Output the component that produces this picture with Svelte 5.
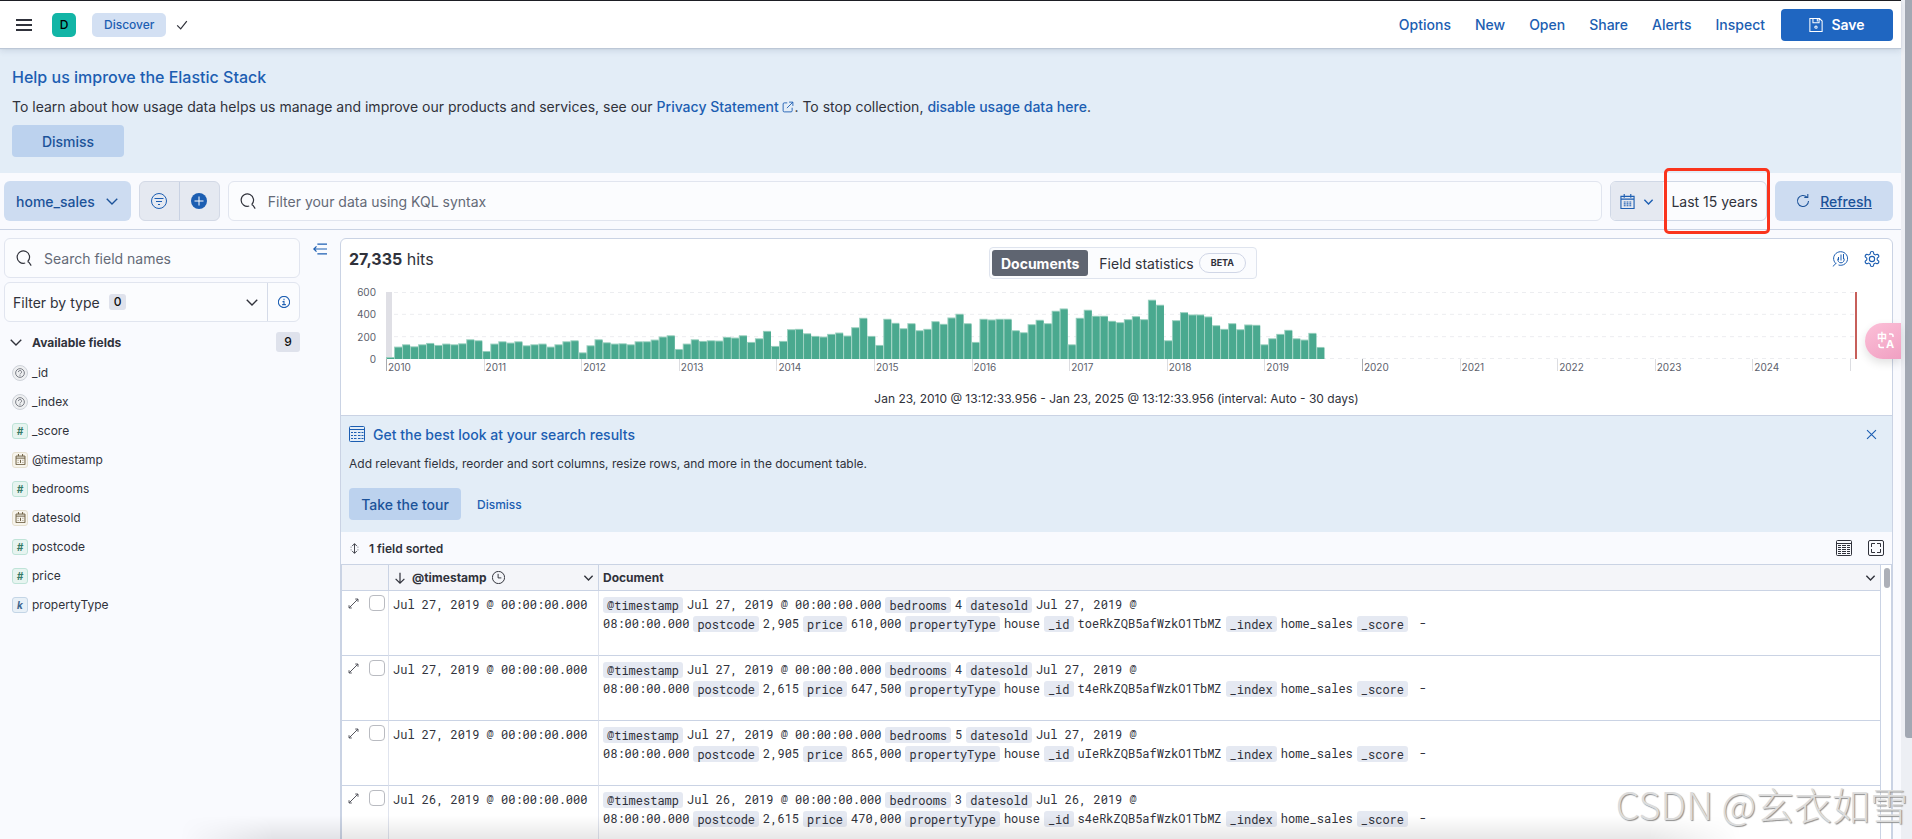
<script>
  const menuLinks = ['Options', 'New', 'Open', 'Share', 'Alerts', 'Inspect'];

  const fields = [
    { name: '_id', type: 'unknown' },
    { name: '_index', type: 'unknown' },
    { name: '_score', type: 'number' },
    { name: '@timestamp', type: 'date' },
    { name: 'bedrooms', type: 'number' },
    { name: 'datesold', type: 'date' },
    { name: 'postcode', type: 'number' },
    { name: 'price', type: 'number' },
    { name: 'propertyType', type: 'keyword' }
  ];

  // documents per 30 day bucket
  const counts = [
    18, 111, 132, 114, 132, 144, 126, 138, 132, 141, 177, 168, 72, 138, 159, 147, 159, 123, 132, 138,
    111, 132, 159, 168, 60, 123, 177, 150, 138, 141, 132, 159, 159, 174, 201, 213, 90, 138, 177, 162,
    168, 165, 198, 192, 213, 153, 186, 252, 117, 162, 267, 270, 231, 207, 201, 225, 237, 210, 285, 369,
    207, 126, 360, 324, 276, 321, 258, 270, 339, 315, 372, 405, 321, 153, 360, 354, 360, 360, 258, 240,
    312, 351, 321, 432, 453, 132, 369, 441, 387, 387, 342, 330, 357, 384, 357, 531, 486, 168, 348, 420,
    399, 399, 381, 303, 270, 321, 267, 309, 306, 132, 186, 225, 261, 186, 174, 234, 108
  ];
  const years = Array.from({ length: 15 }, (_, i) => 2010 + i);
  const maxCount = 600;
  const plotWidth = 1471;
  const plotHeight = 67;
  const bucketWidth = 8.02;
  const yearWidth = (97.6 / plotWidth) * 100;

  const docs = [
    { day: 'Jul 27, 2019', bedrooms: 4, postcode: '2,905', price: '610,000', id: 'toeRkZQB5afWzkO1TbMZ' },
    { day: 'Jul 27, 2019', bedrooms: 4, postcode: '2,615', price: '647,500', id: 't4eRkZQB5afWzkO1TbMZ' },
    { day: 'Jul 27, 2019', bedrooms: 5, postcode: '2,905', price: '865,000', id: 'uIeRkZQB5afWzkO1TbMZ' },
    { day: 'Jul 26, 2019', bedrooms: 3, postcode: '2,615', price: '470,000', id: 's4eRkZQB5afWzkO1TbMZ' }
  ];

  const icons = {
    check: 'M2.5 8.5l4 4 7-9',
    down: 'M2 5.5l6 6 6-6',
    search: 'M11.6 11.6a6.2 6.2 0 1 0-2.4 1.4M11.6 11.4l1.6 1.2 2 3',
    filter: 'M8 .5a7.5 7.5 0 1 0 0 15 7.5 7.5 0 0 0 0-15zM3.5 5.5h9M5 8.5h6M7 11.5h2',
    calendar: 'M1 2.5h14v13H1zM1 5.5h14M4.5 0v4M11.5 0v4M4 8.5h2M7 8.5h2M10 8.5h2M4 10.5h2M7 10.5h2M10 10.5h2M4 12.5h2M7 12.5h2M10 12.5h2',
    refresh: 'M12.5 3.5A6.3 6.3 0 1 0 14.3 8M13.5 0v4h-4',
    save: 'M1 .5h11l3 3v12H1zM4.5.5v5h7v-5M9.5 1v3M8 9.2a1.3 1.3 0 1 0 0 2.6 1.3 1.3 0 0 0 0-2.6z',
    info: 'M8 .5a7.5 7.5 0 1 0 0 15 7.5 7.5 0 0 0 0-15zM8 3.5v2M6 7.5h2v4M5.5 11.5h5',
    collapse: 'M5 2.5h11M1 8h15M5 13.5h11M4 5L1 8l3 3',
    external: 'M7 2.5H3A1.5 1.5 0 0 0 1.5 4v9A1.5 1.5 0 0 0 3 14.5h9a1.5 1.5 0 0 0 1.5-1.5V9M9.5 1.5h5v5M14.5 1.5l-8 8',
    lens: 'M4.2 12.8A7 6.8 0 1 1 6.5 14M4.2 12.2L.8 15.5M6 7.5a3.2 3.2 0 1 0 6 0M9 3.5v6M6.5 6v3M11.5 3v5',
    table: 'M1.5.5h13a1 1 0 0 1 1 1v13a1 1 0 0 1-1 1h-13a1 1 0 0 1-1-1v-13a1 1 0 0 1 1-1zM.5 3.5h15M2 6.5h2M5 6.5h2.5M9 6.5h2.5M12.5 6.5h2M2 9.5h2M5 9.5h2.5M9 9.5h2.5M12.5 9.5h2M2 12.5h2M5 12.5h2.5M9 12.5h2.5M12.5 12.5h2',
    density: 'M1.5.5h13a1 1 0 0 1 1 1v13a1 1 0 0 1-1 1h-13a1 1 0 0 1-1-1v-13a1 1 0 0 1 1-1zM.5 3.5h15M2 5.5h3M6 5.5h4M11 5.5h3M2 7.5h3M6 7.5h4M11 7.5h3M2 9.5h3M6 9.5h4M11 9.5h3M2 11.5h3M6 11.5h4M11 11.5h3M2 13.5h3M6 13.5h4M11 13.5h3',
    fullscreen: 'M2 .5h12A1.5 1.5 0 0 1 15.5 2v12a1.5 1.5 0 0 1-1.5 1.5H2A1.5 1.5 0 0 1 .5 14V2A1.5 1.5 0 0 1 2 .5zM3.5 7V3.5H7M9 3.5h3.5V7M12.5 9v3.5H9M7 12.5H3.5V9',
    close: 'M1.5 1.5l13 13M14.5 1.5l-13 13',
    sort: 'M8 1v14M4.5 4.5L8 1l3.5 3.5M4.5 11.5L8 15l3.5-3.5M3 5.5v1M13 5.5v1M3 9.5v1M13 9.5v1',
    arrowDown: 'M8 2v12M3 9l5 5 5-5',
    clock: 'M8 .5a7.5 7.5 0 1 0 0 15 7.5 7.5 0 0 0 0-15zM7.5 3.5v5h4',
    expand: 'M2 14L14 2M10.5 1.5h4v4M1.5 10.5v4h4',
    unknown: 'M8 1a7 7 0 1 0 0 14A7 7 0 0 0 8 1zM5.5 6.5A2.5 2.5 0 1 1 9 8.7q-1 .5-1 1.5M8 11.5V13',
    date: 'M1.5 3h13v12.5h-13zM1.5 6h13M5 0v3M11 0v3M4.5 8.5v1M4.5 12v1M8 8.5V13M11.5 8.5v1M11.5 12v1'
  };
</script>

{#snippet icon(name, size = 16, weight = 1)}
  <svg class="icon" width={size} height={size} viewBox="0 0 16 16" stroke-width={weight} aria-hidden="true">
    <path d={icons[name]} />
  </svg>
{/snippet}

<div class="app">
  <div class="page">
    <header class="header">
      <button class="icon-btn menu" aria-label="Toggle navigation">
        <svg width="16" height="12" viewBox="0 0 16 12"><path d="M0 0h16v2H0zM0 5h16v2H0zM0 10h16v2H0z" fill="currentColor" /></svg>
      </button>
      <span class="avatar">D</span>
      <a class="crumb" href="#discover">Discover</a>
      <span class="saved">{@render icon('check', 14, 1.4)}</span>
      <nav class="top-nav">
        {#each menuLinks as link}
          <a href="#{link.toLowerCase()}">{link}</a>
        {/each}
      </nav>
      <button class="btn primary">{@render icon('save', 14, 1.2)} Save</button>
    </header>

    <section class="telemetry">
      <h2>Help us improve the Elastic Stack</h2>
      <p>
        To learn about how usage data helps us manage and improve our products and services, see our
        <a href="#privacy">Privacy Statement {@render icon('external', 12, 1.2)}</a>. To stop collection,
        <a href="#usage">disable usage data here</a>.
      </p>
      <button class="btn filled">Dismiss</button>
    </section>

    <div class="query-bar">
      <button class="data-view">home_sales {@render icon('down', 14, 1.6)}</button>
      <div class="filter-group">
        <button aria-label="Saved queries">{@render icon('filter')}</button>
        <button aria-label="Add filter">
          <svg width="16" height="16" viewBox="0 0 16 16">
            <circle cx="8" cy="8" r="8" fill="currentColor" />
            <path d="M8 3.5v9M3.5 8h9" stroke="#fff" />
          </svg>
        </button>
      </div>
      <label class="search-box grow">
        {@render icon('search', 16, 1.2)}
        <input type="text" aria-label="Query" placeholder="Filter your data using KQL syntax" />
      </label>
      <div class="date-picker">
        <button class="quick" aria-label="Date quick select">
          {@render icon('calendar', 15, 1.2)}
          {@render icon('down', 11, 2)}
        </button>
        <div class="range">
          <button>Last 15 years</button>
        </div>
      </div>
      <button class="refresh">{@render icon('refresh', 14, 1.2)} <span>Refresh</span></button>
    </div>

    <div class="body">
      <aside class="sidebar">
        <label class="search-box">
          {@render icon('search', 16, 1.2)}
          <input type="text" aria-label="Field names" placeholder="Search field names" />
        </label>
        <div class="type-filter">
          <button class="type-btn">Filter by type <span class="count">0</span> {@render icon('down', 14, 1.6)}</button>
          <button class="type-info" aria-label="Field types">{@render icon('info', 12, 1.4)}</button>
        </div>
        <button class="group-head">
          {@render icon('down', 14, 1.6)}
          <span>Available fields</span>
          <span class="total">9</span>
        </button>
        <ul class="fields">
          {#each fields as field}
            <li>
              <span class="token {field.type}">
                {#if field.type === 'number'}
                  #
                {:else if field.type === 'keyword'}
                  k
                {:else}
                  {@render icon(field.type, field.type === 'date' ? 11 : 10, 1.4)}
                {/if}
              </span>
              {field.name}
            </li>
          {/each}
        </ul>
      </aside>

      <button class="icon-btn collapse" aria-label="Hide sidebar">{@render icon('collapse', 14, 1.4)}</button>

      <main class="panel">
        <section class="histogram">
          <div class="panel-top">
            <p class="hits"><strong>27,335</strong> hits</p>
            <div class="tabs">
              <button class="active">Documents</button>
              <button>Field statistics <span class="beta">BETA</span></button>
            </div>
            <div class="chart-tools">
              <button class="icon-btn" aria-label="Edit visualization">{@render icon('lens')}</button>
              <button class="icon-btn" aria-label="Chart options">
                <svg class="icon" width="18" height="18" viewBox="0 0 24 24" stroke-width="1.5">
                  <path d="M12.22 2h-.44a2 2 0 0 0-2 2v.18a2 2 0 0 1-1 1.73l-.43.25a2 2 0 0 1-2 0l-.15-.08a2 2 0 0 0-2.73.73l-.22.38a2 2 0 0 0 .73 2.73l.15.1a2 2 0 0 1 1 1.72v.51a2 2 0 0 1-1 1.74l-.15.09a2 2 0 0 0-.73 2.73l.22.38a2 2 0 0 0 2.73.73l.15-.08a2 2 0 0 1 2 0l.43.25a2 2 0 0 1 1 1.73V20a2 2 0 0 0 2 2h.44a2 2 0 0 0 2-2v-.18a2 2 0 0 1 1-1.73l.43-.25a2 2 0 0 1 2 0l.15.08a2 2 0 0 0 2.73-.73l.22-.39a2 2 0 0 0-.73-2.73l-.15-.08a2 2 0 0 1-1-1.74v-.5a2 2 0 0 1 1-1.74l.15-.09a2 2 0 0 0 .73-2.73l-.22-.38a2 2 0 0 0-2.73-.73l-.15.08a2 2 0 0 1-2 0l-.43-.25a2 2 0 0 1-1-1.73V4a2 2 0 0 0-2-2z" />
                  <circle cx="12" cy="12" r="3.5" />
                </svg>
              </button>
            </div>
          </div>

          <div class="chart">
            <div class="y-axis">
              <span>600</span><span>400</span><span>200</span><span>0</span>
            </div>
            <div class="plot">
              <svg viewBox="0 0 {plotWidth} {plotHeight}" preserveAspectRatio="none" height={plotHeight}>
                {#each [0, 200, 400, 600] as tick}
                  {@const y = Math.min(plotHeight - 0.5, Math.max(0.5, plotHeight - (tick / maxCount) * plotHeight))}
                  <line x1="0" x2={plotWidth} y1={y} y2={y} stroke="#ecedf0" stroke-dasharray="4 4" />
                {/each}
                <rect x="0" y="0" width="6" height={plotHeight} fill="#dfdfe5" />
                {#each counts as count, i}
                  {@const h = (count / maxCount) * plotHeight}
                  <rect x={i * bucketWidth} y={plotHeight - h} width={bucketWidth} height={h} fill="#9ad0bf" />
                  <rect x={i * bucketWidth + 1} y={plotHeight - h + 1} width={bucketWidth - 1} height={h - 1} fill="#4aa98f" />
                {/each}
                <rect x={plotWidth - 2} y="0" width="2" height={plotHeight} fill="#c75f5a" />
              </svg>
              <div class="x-axis">
                {#each years as year}
                  <span class:decade={year % 10 === 0} style="width: {yearWidth}%">{year}</span>
                {/each}
                <span></span>
              </div>
            </div>
          </div>
          <p class="interval">Jan 23, 2010 @ 13:12:33.956 - Jan 23, 2025 @ 13:12:33.956 (interval: Auto - 30 days)</p>
        </section>

        <section class="tour">
          <div class="tour-title">
            {@render icon('table')}
            <h3>Get the best look at your search results</h3>
            <button class="icon-btn" aria-label="Close">{@render icon('close', 11, 1.6)}</button>
          </div>
          <p>Add relevant fields, reorder and sort columns, resize rows, and more in the document table.</p>
          <div class="tour-actions">
            <button class="btn filled">Take the tour</button>
            <button class="text-btn">Dismiss</button>
          </div>
        </section>

        <div class="grid-bar">
          <button class="sorted">{@render icon('sort', 11, 1.3)} 1 field sorted</button>
          <button class="icon-btn" aria-label="Display options">{@render icon('density')}</button>
          <button class="icon-btn" aria-label="Full screen">{@render icon('fullscreen')}</button>
        </div>

        <div class="grid-wrap">
          <table>
            <thead>
              <tr>
                <th class="col-ctl" aria-label="Controls"></th>
                <th class="col-time">
                  <div class="th">
                    {@render icon('arrowDown', 14, 1.4)} <span>@timestamp</span> {@render icon('clock', 13, 1.2)}
                    <span class="th-menu">{@render icon('down', 11, 2)}</span>
                  </div>
                </th>
                <th>
                  <div class="th">Document <span class="th-menu">{@render icon('down', 11, 2)}</span></div>
                </th>
              </tr>
            </thead>
            <tbody>
              {#each docs as doc}
                <tr>
                  <td>
                    <div class="controls">
                      <button class="icon-btn" aria-label="Expand document">{@render icon('expand', 11, 1.2)}</button>
                      <input type="checkbox" aria-label="Select document {doc.id}" />
                    </div>
                  </td>
                  <td>{doc.day} @ 00:00:00.000</td>
                  <td>
                    <div class="source">
                      <b>@timestamp</b><span>{doc.day} @ 00:00:00.000</span><b>bedrooms</b><span>{doc.bedrooms}</span><b>datesold</b><span>{doc.day} @</span>
                    </div>
                    <div class="source">
                      <span>08:00:00.000</span><b>postcode</b><span>{doc.postcode}</span><b>price</b><span>{doc.price}</span><b>propertyType</b><span>house</span><b>_id</b><span>{doc.id}</span><b>_index</b><span>home_sales</span><b>_score</b><span>&nbsp;-</span>
                    </div>
                  </td>
                </tr>
              {/each}
            </tbody>
          </table>
          <div class="grid-scroll"><div class="grid-thumb"></div></div>
        </div>
      </main>
    </div>

    <button class="translate" aria-label="Translate">
      <svg width="20" height="22" viewBox="0 0 20 22">
        <text x="0" y="11" font-size="10" font-weight="700">中</text>
        <text x="9" y="18" font-size="11" font-weight="700">A</text>
        <path d="M12 4h2a2 2 0 0 1 2 2v1M2 14v1.5a2 2 0 0 0 2 2h3" fill="none" stroke="#fff" stroke-width="1.5" />
      </svg>
    </button>
  </div>

  <div class="page-scroll"><div class="page-thumb"></div></div>
  <div class="shade"></div>
  <div class="watermark">CSDN @玄衣如雪</div>
</div>

<style>
  :global(body) {
    margin: 0;
    background: #f9fafe;
  }

  .app {
    position: relative;
    display: flex;
    height: 100vh;
    overflow: hidden;
    font-family: Inter, "Noto Sans CJK SC", sans-serif;
    font-size: 14px;
    color: #30323b;
    background: #f9fafe;
  }

  .app :global(*) {
    box-sizing: border-box;
  }

  .page {
    position: relative;
    flex: 1;
    min-width: 0;
    display: flex;
    flex-direction: column;
  }

  button,
  input {
    font: inherit;
    color: inherit;
  }

  button {
    border: 0;
    padding: 0;
    background: none;
    cursor: pointer;
    display: inline-flex;
    align-items: center;
  }

  h2,
  h3,
  p,
  ul {
    margin: 0;
    padding: 0;
  }

  a {
    color: #1c5eb2;
    font-weight: 500;
    text-decoration: none;
  }

  .icon {
    fill: none;
    stroke: currentColor;
    flex: none;
  }

  .icon-btn {
    color: #1c5eb2;
  }

  /* header */
  .header {
    position: relative;
    z-index: 1;
    flex: none;
    display: flex;
    align-items: center;
    height: 48px;
    padding: 0 8px 0 16px;
    background: #fff;
    border-top: 1px solid #1d1e24;
    box-shadow: 0 1px 1px #bcc7d6, 0 3px 6px rgba(60, 80, 110, 0.14);
  }

  .menu {
    color: #30323b;
    margin-right: 20px;
  }

  .avatar {
    width: 24px;
    height: 24px;
    border-radius: 5px;
    background: #12b5a6;
    color: #000;
    font-size: 12px;
    font-weight: 500;
    line-height: 24px;
    text-align: center;
  }

  .crumb {
    margin-left: 16px;
    padding: 0 12px;
    border-radius: 5px;
    background: #d3e0f3;
    font-size: 12px;
    line-height: 24px;
  }

  .saved {
    display: flex;
    margin-left: 9px;
  }

  .top-nav {
    display: flex;
    gap: 24px;
    margin: 0 16px 0 auto;
  }

  .btn {
    justify-content: center;
    gap: 8px;
    width: 112px;
    height: 32px;
    border-radius: 4px;
    font-weight: 500;
  }

  .primary {
    background: #1f66c1;
    color: #fff;
    font-weight: 600;
  }

  .filled {
    background: #bcd2ee;
    color: #1b5299;
  }

  /* usage data banner */
  .telemetry {
    flex: none;
    padding: 16px 12px;
    background: #e3edf7;
  }

  .telemetry h2 {
    font-size: 16px;
    font-weight: 500;
    line-height: 26px;
    color: #1c5eb2;
  }

  .telemetry p {
    margin: 5px 0 6px;
    line-height: 24px;
  }

  .telemetry .btn {
    display: flex;
  }

  .telemetry a .icon {
    vertical-align: -1px;
  }

  /* query bar */
  .query-bar {
    flex: none;
    display: flex;
    gap: 8px;
    padding: 8px 8px 8px 4px;
    border-bottom: 1px solid #cad3e4;
  }

  .query-bar > * {
    height: 40px;
  }

  .data-view,
  .refresh {
    padding: 0 12px;
    gap: 10px;
    border-radius: 6px;
    background: #cddcf1;
    color: #1b5299;
    font-weight: 500;
  }

  .refresh {
    width: 118px;
    justify-content: center;
    text-decoration: underline;
  }

  .filter-group {
    display: flex;
    width: 81px;
    border: 1px solid #d3d9e6;
    border-radius: 6px;
    background: #e5e9f1;
    overflow: hidden;
  }

  .filter-group button {
    flex: 1;
    justify-content: center;
    color: #1c5eb2;
  }

  .filter-group button + button {
    border-left: 1px solid #c9d2e3;
  }

  .search-box {
    display: flex;
    align-items: center;
    gap: 12px;
    height: 40px;
    padding: 0 11px;
    border: 1px solid #e1e5ef;
    border-radius: 6px;
    background: #fbfcfe;
  }

  .search-box input {
    flex: 1;
    min-width: 0;
    padding: 0;
    border: 0;
    outline: 0;
    background: none;
  }

  .search-box input::placeholder {
    color: #646a77;
    opacity: 1;
  }

  .grow {
    flex: 1;
  }

  .date-picker {
    display: flex;
    width: 157px;
    border: 1px solid #d0d8e6;
    border-radius: 6px;
    background: #fbfcfe;
  }

  .quick {
    justify-content: center;
    gap: 8px;
    width: 52px;
    border-radius: 5px 0 0 5px;
    background: #e5e9f1;
    color: #1c5eb2;
  }

  .range {
    position: relative;
    flex: 1;
    display: flex;
    justify-content: center;
  }

  .range::after {
    content: '';
    position: absolute;
    inset: -14px -4px -14px 1px;
    border: 3px solid #fa341d;
    border-radius: 5px;
    pointer-events: none;
  }

  .range button {
    white-space: nowrap;
  }

  /* body */
  .body {
    flex: 1;
    min-height: 0;
    display: flex;
    align-items: flex-start;
    padding: 8px 8px 0 4px;
  }

  .sidebar {
    flex: none;
    width: 296px;
  }

  .type-filter {
    display: flex;
    height: 40px;
    margin-top: 4px;
    border: 1px solid #e1e5ef;
    border-radius: 6px;
    background: #fbfcfe;
  }

  .type-btn {
    flex: 1;
    gap: 9px;
    padding: 0 8px;
  }

  .type-btn > :global(.icon) {
    margin-left: auto;
  }

  .count {
    padding: 0 5px;
    border-radius: 3px;
    background: #dfe2ec;
    color: #111;
    font-size: 12px;
    font-weight: 500;
    line-height: 16px;
  }

  .type-info {
    justify-content: center;
    width: 32px;
    border-left: 1px solid #d5dbe8;
    color: #1c5eb2;
  }

  .group-head {
    width: 100%;
    margin-top: 10px;
    padding-left: 5px;
    gap: 9px;
    font-size: 12px;
    font-weight: 700;
  }

  .total {
    margin-left: auto;
    width: 24px;
    border-radius: 3px;
    background: #dfe2ec;
    color: #111;
    font-weight: 500;
    line-height: 20px;
  }

  .fields {
    list-style: none;
    margin-top: 6px;
    padding-left: 8px;
  }

  .fields li {
    display: flex;
    align-items: center;
    gap: 4px;
    height: 29px;
    font-size: 12px;
  }

  .token {
    display: flex;
    align-items: center;
    justify-content: center;
    width: 16px;
    height: 16px;
    border: 1px solid #cfd3da;
    border-radius: 3px;
    background: #eeeff1;
    color: #6b6f78;
    font-size: 10px;
    font-weight: 700;
  }

  .token.unknown {
    border-radius: 8px;
  }

  .token.number {
    border-color: #bfe3d8;
    background: #e7f4f0;
    color: #367a67;
    font-style: italic;
  }

  .token.date {
    border-color: #e5dfcf;
    background: #f7f4ec;
    color: #6a5c3f;
  }

  .token.keyword {
    border-color: #c4d5e6;
    background: #e8f0f7;
    color: #3f668e;
    font-style: italic;
  }

  .collapse {
    margin: 4px 13px 0;
  }

  /* results panel */
  .panel {
    flex: 1;
    min-width: 0;
    border: 1px solid #cad3e4;
    border-radius: 6px 6px 0 0;
    background: #fff;
  }

  .histogram {
    padding-bottom: 7px;
    border-bottom: 1px solid #cad3e4;
  }

  .panel-top {
    display: grid;
    grid-template-columns: 1fr auto 1fr;
    align-items: start;
    padding: 8px 11px 0 8px;
  }

  .hits {
    font-size: 16px;
    line-height: 24px;
  }

  .tabs {
    display: flex;
    height: 32px;
    margin-left: 16px;
    padding: 2px;
    border: 1px solid #dfe4ee;
    border-radius: 4px;
    background: #fbfcfe;
  }

  .tabs button {
    padding: 0 8px 0 11px;
    gap: 5px;
    border-radius: 3px;
  }

  .tabs .active {
    padding: 0 9px;
    background: #5f6571;
    color: #fff;
    font-weight: 700;
  }

  .beta {
    padding: 0 11px;
    border: 1px solid #d0d6e6;
    border-radius: 10px;
    font-size: 9px;
    font-weight: 700;
    line-height: 18px;
  }

  .chart-tools {
    display: flex;
    justify-content: flex-end;
    align-items: center;
    gap: 15px;
    height: 24px;
  }

  .chart {
    display: flex;
    gap: 10px;
    margin-top: 13px;
    padding-right: 35px;
    font-size: 10px;
    line-height: 12px;
    color: #5d616c;
  }

  .y-axis {
    display: flex;
    flex-direction: column;
    justify-content: space-between;
    width: 35px;
    height: 79px;
    margin: -6px 0;
    text-align: right;
  }

  .plot {
    flex: 1;
    min-width: 0;
  }

  .plot svg {
    display: block;
    width: 100%;
  }

  .x-axis {
    display: flex;
    height: 12px;
  }

  .x-axis span {
    flex: none;
    padding: 2px 0 0 1px;
    height: 12px;
    border-left: 1px solid #dcdde1;
  }

  .x-axis .decade {
    border-color: #a9abb1;
  }

  .interval {
    margin-top: 19px;
    font-size: 12px;
    line-height: 18px;
    text-align: center;
  }

  /* tour callout */
  .tour {
    padding: 8px 8px 12px;
    background: #e3edf7;
  }

  .tour-title {
    display: flex;
    align-items: center;
    gap: 8px;
    height: 20px;
    padding-right: 7px;
    color: #1c5eb2;
  }

  .tour-title h3 {
    font-size: 14px;
    font-weight: 500;
  }

  .tour-title button {
    margin-left: auto;
  }

  .tour p {
    margin: 12px 0 16px;
    font-size: 12px;
    line-height: 16px;
  }

  .tour-actions {
    display: flex;
    gap: 16px;
  }

  .text-btn {
    color: #1c5eb2;
    font-size: 12px;
    font-weight: 500;
  }

  /* document table */
  .grid-bar {
    display: flex;
    align-items: center;
    gap: 16px;
    height: 33px;
    padding: 0 8px;
    border-bottom: 1px solid #cad3e4;
    background: #f9fafe;
  }

  .grid-bar .icon-btn {
    color: #30323b;
  }

  .sorted {
    gap: 9px;
    margin-right: auto;
    font-size: 12px;
    font-weight: 600;
  }

  .grid-wrap {
    display: flex;
    border-left: 1px solid #cad3e4;
    border-right: 1px solid #cad3e4;
  }

  table {
    flex: 1;
    width: 100%;
    min-width: 0;
    table-layout: fixed;
    border-spacing: 0;
    font-size: 12px;
    line-height: 19px;
  }

  th,
  td {
    padding: 0 4px;
    border-right: 1px solid #e0e4ee;
    border-bottom: 1px solid #cad3e4;
    text-align: left;
    vertical-align: top;
  }

  th {
    height: 26px;
    background: #f4f5f9;
    border-right-color: #cad3e4;
    font-weight: 700;
  }

  th:last-child,
  td:last-child {
    border-right-color: #cad3e4;
  }

  .col-ctl {
    width: 47px;
  }

  .col-time {
    width: 210px;
  }

  .th {
    display: flex;
    align-items: center;
    gap: 5px;
    height: 25px;
  }

  .th-menu {
    display: flex;
    margin-left: auto;
  }

  td {
    height: 65px;
    padding-top: 4px;
    font-family: "Roboto Mono", "DejaVu Sans Mono", monospace;
    white-space: nowrap;
  }

  .controls {
    display: flex;
    align-items: center;
    gap: 10px;
    height: 16px;
    padding-left: 2px;
  }

  .controls .icon-btn {
    color: #30323b;
  }

  .controls input {
    appearance: none;
    flex: none;
    width: 16px;
    height: 16px;
    margin: 0;
    border: 1px solid #b9bbc1;
    border-radius: 4px;
    background: #fff;
  }

  .source {
    display: flex;
    align-items: center;
    gap: 4px;
    height: 19px;
  }

  .source b {
    padding: 0 4px;
    border-radius: 3px;
    background: #e5e9f2;
    font-weight: 400;
    line-height: 16px;
  }

  .grid-scroll {
    flex: none;
    width: 10px;
    padding: 3px 0 0 3px;
  }

  .grid-thumb {
    width: 6px;
    height: 20px;
    border-radius: 3px;
    background: #adb0b8;
  }

  /* floating pieces */
  .translate {
    position: absolute;
    top: 323px;
    right: 0;
    width: 36px;
    height: 36px;
    padding-left: 12px;
    border-radius: 18px 0 0 18px;
    background: linear-gradient(150deg, #fcc0d8, #f0a0c2);
    box-shadow: 0 4px 10px rgba(0, 0, 0, 0.12);
  }

  .translate svg {
    flex: none;
    overflow: visible;
  }

  .translate text {
    fill: #fff;
    font-family: Inter, "Noto Sans CJK SC", sans-serif;
  }

  .page-scroll {
    flex: none;
    width: 11px;
    padding-left: 4px;
    background: #edeff4;
  }

  .page-thumb {
    height: 88%;
    border-radius: 0 0 0 3px;
    background: #a2a8b3;
  }

  .shade {
    position: absolute;
    left: 180px;
    right: 170px;
    bottom: 0;
    height: 24px;
    background: linear-gradient(transparent, rgba(0, 0, 0, 0.09));
    mask-image: linear-gradient(90deg, transparent, #000 6%, #000 94%, transparent);
    pointer-events: none;
  }

  .watermark {
    position: absolute;
    right: 4px;
    bottom: 7px;
    color: #dcdcdc;
    font-family: "Noto Sans CJK SC", sans-serif;
    font-size: 38px;
    font-weight: 300;
    line-height: 56px;
    text-shadow: 1px 1px 1px #8f8f8f;
    pointer-events: none;
  }
</style>
